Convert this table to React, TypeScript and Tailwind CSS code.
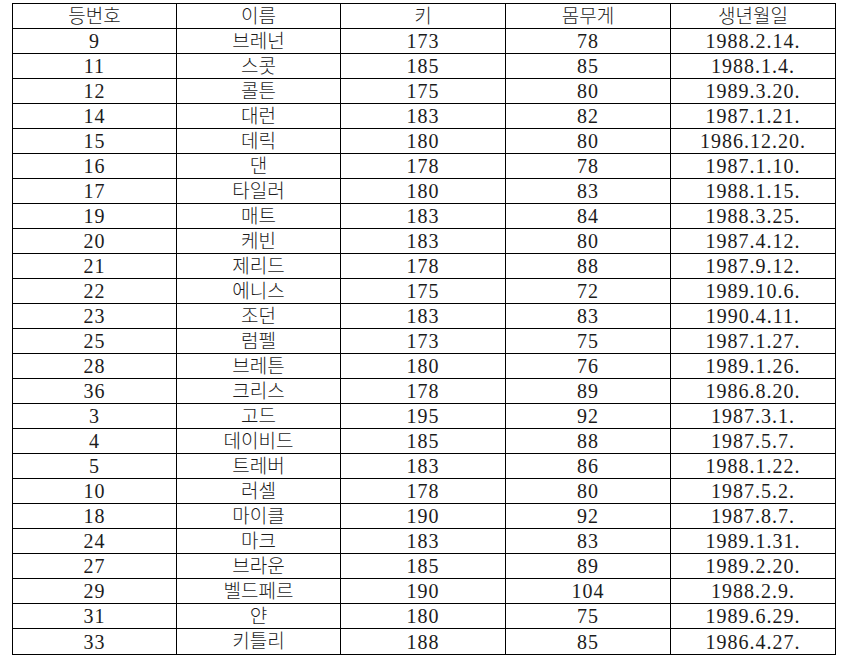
import React from "react";

const rows: [string, string, string, string, string][] = [
  ["9", "브레넌", "173", "78", "1988.2.14."],
  ["11", "스콧", "185", "85", "1988.1.4."],
  ["12", "콜튼", "175", "80", "1989.3.20."],
  ["14", "대런", "183", "82", "1987.1.21."],
  ["15", "데릭", "180", "80", "1986.12.20."],
  ["16", "댄", "178", "78", "1987.1.10."],
  ["17", "타일러", "180", "83", "1988.1.15."],
  ["19", "매트", "183", "84", "1988.3.25."],
  ["20", "케빈", "183", "80", "1987.4.12."],
  ["21", "제리드", "178", "88", "1987.9.12."],
  ["22", "에니스", "175", "72", "1989.10.6."],
  ["23", "조던", "183", "83", "1990.4.11."],
  ["25", "럼펠", "173", "75", "1987.1.27."],
  ["28", "브레튼", "180", "76", "1989.1.26."],
  ["36", "크리스", "178", "89", "1986.8.20."],
  ["3", "고드", "195", "92", "1987.3.1."],
  ["4", "데이비드", "185", "88", "1987.5.7."],
  ["5", "트레버", "183", "86", "1988.1.22."],
  ["10", "러셀", "178", "80", "1987.5.2."],
  ["18", "마이클", "190", "92", "1987.8.7."],
  ["24", "마크", "183", "83", "1989.1.31."],
  ["27", "브라운", "185", "89", "1989.2.20."],
  ["29", "벨드페르", "190", "104", "1988.2.9."],
  ["31", "얀", "180", "75", "1989.6.29."],
  ["33", "키틀리", "188", "85", "1986.4.27."],
];

const headers = ["등번호", "이름", "키", "몸무게", "생년월일"];

const font = {
  fontFamily: '"Liberation Serif", "Noto Sans CJK KR", serif',
};

export default function App() {
  return (
    <div className="w-[841px] h-[661px] bg-white pt-[3px] pl-[12px]" style={font}>
      <table className="table-fixed border-collapse w-[823px] text-[#1c1c1c]">
        <colgroup>
          <col className="w-[164px]" />
          <col className="w-[164px]" />
          <col className="w-[165px]" />
          <col className="w-[165px]" />
          <col className="w-[165px]" />
        </colgroup>
        <thead>
          <tr className="h-[25px]">
            {headers.map((h) => (
              <th
                key={h}
                className="border border-black p-0 text-center align-middle font-light text-[19px] leading-none"
              >
                {h}
              </th>
            ))}
          </tr>
        </thead>
        <tbody>
          {rows.map((r, i) => (
            <tr key={i} className={i === rows.length - 1 ? "h-[26px]" : "h-[25px]"}>
              {r.map((c, j) => (
                <td
                  key={j}
                  className={
                    "border border-black p-0 text-center align-middle leading-none " +
                    (j === 1 ? "text-[19px] font-light" : "text-[20px] tracking-[1px]")
                  }
                >
                  {c}
                </td>
              ))}
            </tr>
          ))}
        </tbody>
      </table>
    </div>
  );
}
